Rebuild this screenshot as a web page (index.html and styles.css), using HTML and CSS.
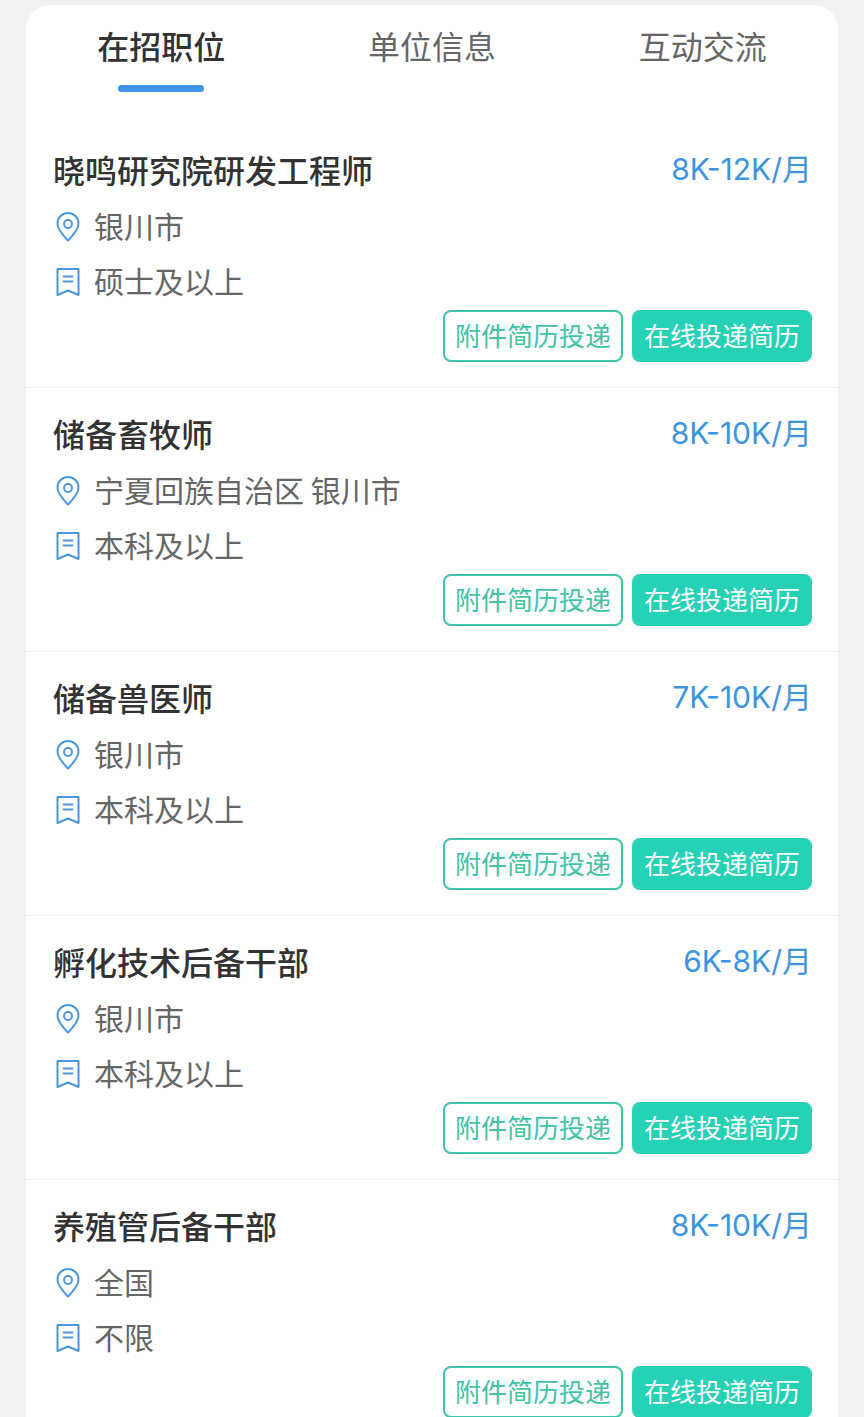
FILE: index.html
```
<!DOCTYPE html>
<html lang="zh-CN">
    <head>
        <meta charset="utf-8">
        <meta name="viewport" content="width=device-width, initial-scale=1">
        <title>在招职位</title>
        <link rel="stylesheet" href="styles.css">
    </head>
<body>
    <svg class="sprite" aria-hidden="true">
        <symbol id="icon-pin" viewBox="0 0 30 34">
            <path d="M15 30.500C11 26.500 4.500 20 4.500 13.500a10.500 10.500 0 0 1 21 0C25.500 20 19 26.500 15 30.500z"/>
            <circle cx="15" cy="14" r="4"/>
        </symbol>
        <symbol id="icon-degree" viewBox="0 0 30 34">
            <path d="M4.500 4h21v26L15 25.500 4.500 30z"/>
            <path d="M10 11.500h10M10 16.500h10"/>
        </symbol>
    </svg>
    <main class="card">
        <nav class="tabs">
            <a class="tab active" href="#jobs" aria-current="page">在招职位</a>
            <a class="tab" href="#company">单位信息</a>
            <a class="tab" href="#chat">互动交流</a>
        </nav>
        <div class="jobs" id="jobs">
            <article class="job">
                <div class="job-head">
                    <h2 class="job-title">晓鸣研究院研发工程师</h2>
                    <span class="salary">8K-12K/月</span>
                </div>
                <div class="meta">
                    <div class="meta-row"><svg class="icon"><use href="#icon-pin"/></svg><span>银川市</span></div>
                    <div class="meta-row"><svg class="icon"><use href="#icon-degree"/></svg><span>硕士及以上</span></div>
                </div>
                <div class="actions">
                    <button type="button" class="btn">附件简历投递</button>
                    <button type="button" class="btn primary">在线投递简历</button>
                </div>
            </article>
            <article class="job">
                <div class="job-head">
                    <h2 class="job-title">储备畜牧师</h2>
                    <span class="salary">8K-10K/月</span>
                </div>
                <div class="meta">
                    <div class="meta-row"><svg class="icon"><use href="#icon-pin"/></svg><span>宁夏回族自治区 银川市</span></div>
                    <div class="meta-row"><svg class="icon"><use href="#icon-degree"/></svg><span>本科及以上</span></div>
                </div>
                <div class="actions">
                    <button type="button" class="btn">附件简历投递</button>
                    <button type="button" class="btn primary">在线投递简历</button>
                </div>
            </article>
            <article class="job">
                <div class="job-head">
                    <h2 class="job-title">储备兽医师</h2>
                    <span class="salary">7K-10K/月</span>
                </div>
                <div class="meta">
                    <div class="meta-row"><svg class="icon"><use href="#icon-pin"/></svg><span>银川市</span></div>
                    <div class="meta-row"><svg class="icon"><use href="#icon-degree"/></svg><span>本科及以上</span></div>
                </div>
                <div class="actions">
                    <button type="button" class="btn">附件简历投递</button>
                    <button type="button" class="btn primary">在线投递简历</button>
                </div>
            </article>
            <article class="job">
                <div class="job-head">
                    <h2 class="job-title">孵化技术后备干部</h2>
                    <span class="salary">6K-8K/月</span>
                </div>
                <div class="meta">
                    <div class="meta-row"><svg class="icon"><use href="#icon-pin"/></svg><span>银川市</span></div>
                    <div class="meta-row"><svg class="icon"><use href="#icon-degree"/></svg><span>本科及以上</span></div>
                </div>
                <div class="actions">
                    <button type="button" class="btn">附件简历投递</button>
                    <button type="button" class="btn primary">在线投递简历</button>
                </div>
            </article>
            <article class="job">
                <div class="job-head">
                    <h2 class="job-title">养殖管后备干部</h2>
                    <span class="salary">8K-10K/月</span>
                </div>
                <div class="meta">
                    <div class="meta-row"><svg class="icon"><use href="#icon-pin"/></svg><span>全国</span></div>
                    <div class="meta-row"><svg class="icon"><use href="#icon-degree"/></svg><span>不限</span></div>
                </div>
                <div class="actions">
                    <button type="button" class="btn">附件简历投递</button>
                    <button type="button" class="btn primary">在线投递简历</button>
                </div>
            </article>
        </div>
    </main>
</body>
</html>
```

FILE: styles.css
```
* {
    box-sizing: border-box;
}

body {
    display: flex;
    flex-direction: column;
    height: 100vh;
    margin: 0;
    padding: 5px 26px 0;
    background-color: #f2f2f2;
    color: #333;
    font-family: "Noto Sans CJK SC", sans-serif;
}

.sprite {
    display: none;
}

.card {
    display: flex;
    flex-direction: column;
    flex: 1;
    min-height: 0;
    overflow: hidden;
    border-radius: 24px 24px 0 0;
    background-color: #fff;
}

.tabs {
    display: flex;
    padding: 18px 0 32px;
}

.tab {
    display: flex;
    flex: 1;
    flex-direction: column;
    align-items: center;
    gap: 18px;
    color: #666;
    font-size: 32px;
    line-height: 44px;
    text-decoration: none;
}

.tab::after {
    content: "";
    width: 86px;
    height: 7px;
    border-radius: 4px;
}

.tab.active {
    color: #333;
    font-weight: 500;
}

.tab.active::after {
    background-color: #3d94e4;
}

/* the list scrolls under the tabs */
.jobs {
    flex: 1;
    min-height: 0;
    overflow-y: auto;
    scrollbar-width: none;
}

.job {
    padding: 21px 26px 25px 27px;
    border-bottom: 1px solid #f0f0f0;
}

.job-head {
    display: flex;
    justify-content: space-between;
    line-height: 48px;
}

.job-title {
    margin: 0;
    font-size: 32px;
    font-weight: 500;
}

.salary {
    color: #3d94e0;
    font-family: Inter, "Noto Sans CJK SC", sans-serif;
    font-size: 30px;
}

.meta {
    display: grid;
    gap: 11px;
    margin: 12px 0 6px;
    color: #666;
    font-size: 30px;
    line-height: 40px;
}

.meta-row {
    display: flex;
    gap: 11px;
}

.icon {
    width: 30px;
    height: 44px;
    fill: none;
    stroke: #4a98de;
    stroke-width: 2;
    stroke-linejoin: round;
}

.actions {
    display: flex;
    justify-content: flex-end;
    gap: 9px;
}

.btn {
    height: 52px;
    padding: 0 10px 2px;
    border: 2px solid #3fc4a8;
    border-radius: 8px;
    background-color: #fff;
    color: #3fc4a8;
    font-family: inherit;
    font-size: 26px;
    line-height: 46px;
}

.btn.primary {
    border-color: #25d2b5;
    background-color: #25d2b5;
    color: #fff;
}
```
